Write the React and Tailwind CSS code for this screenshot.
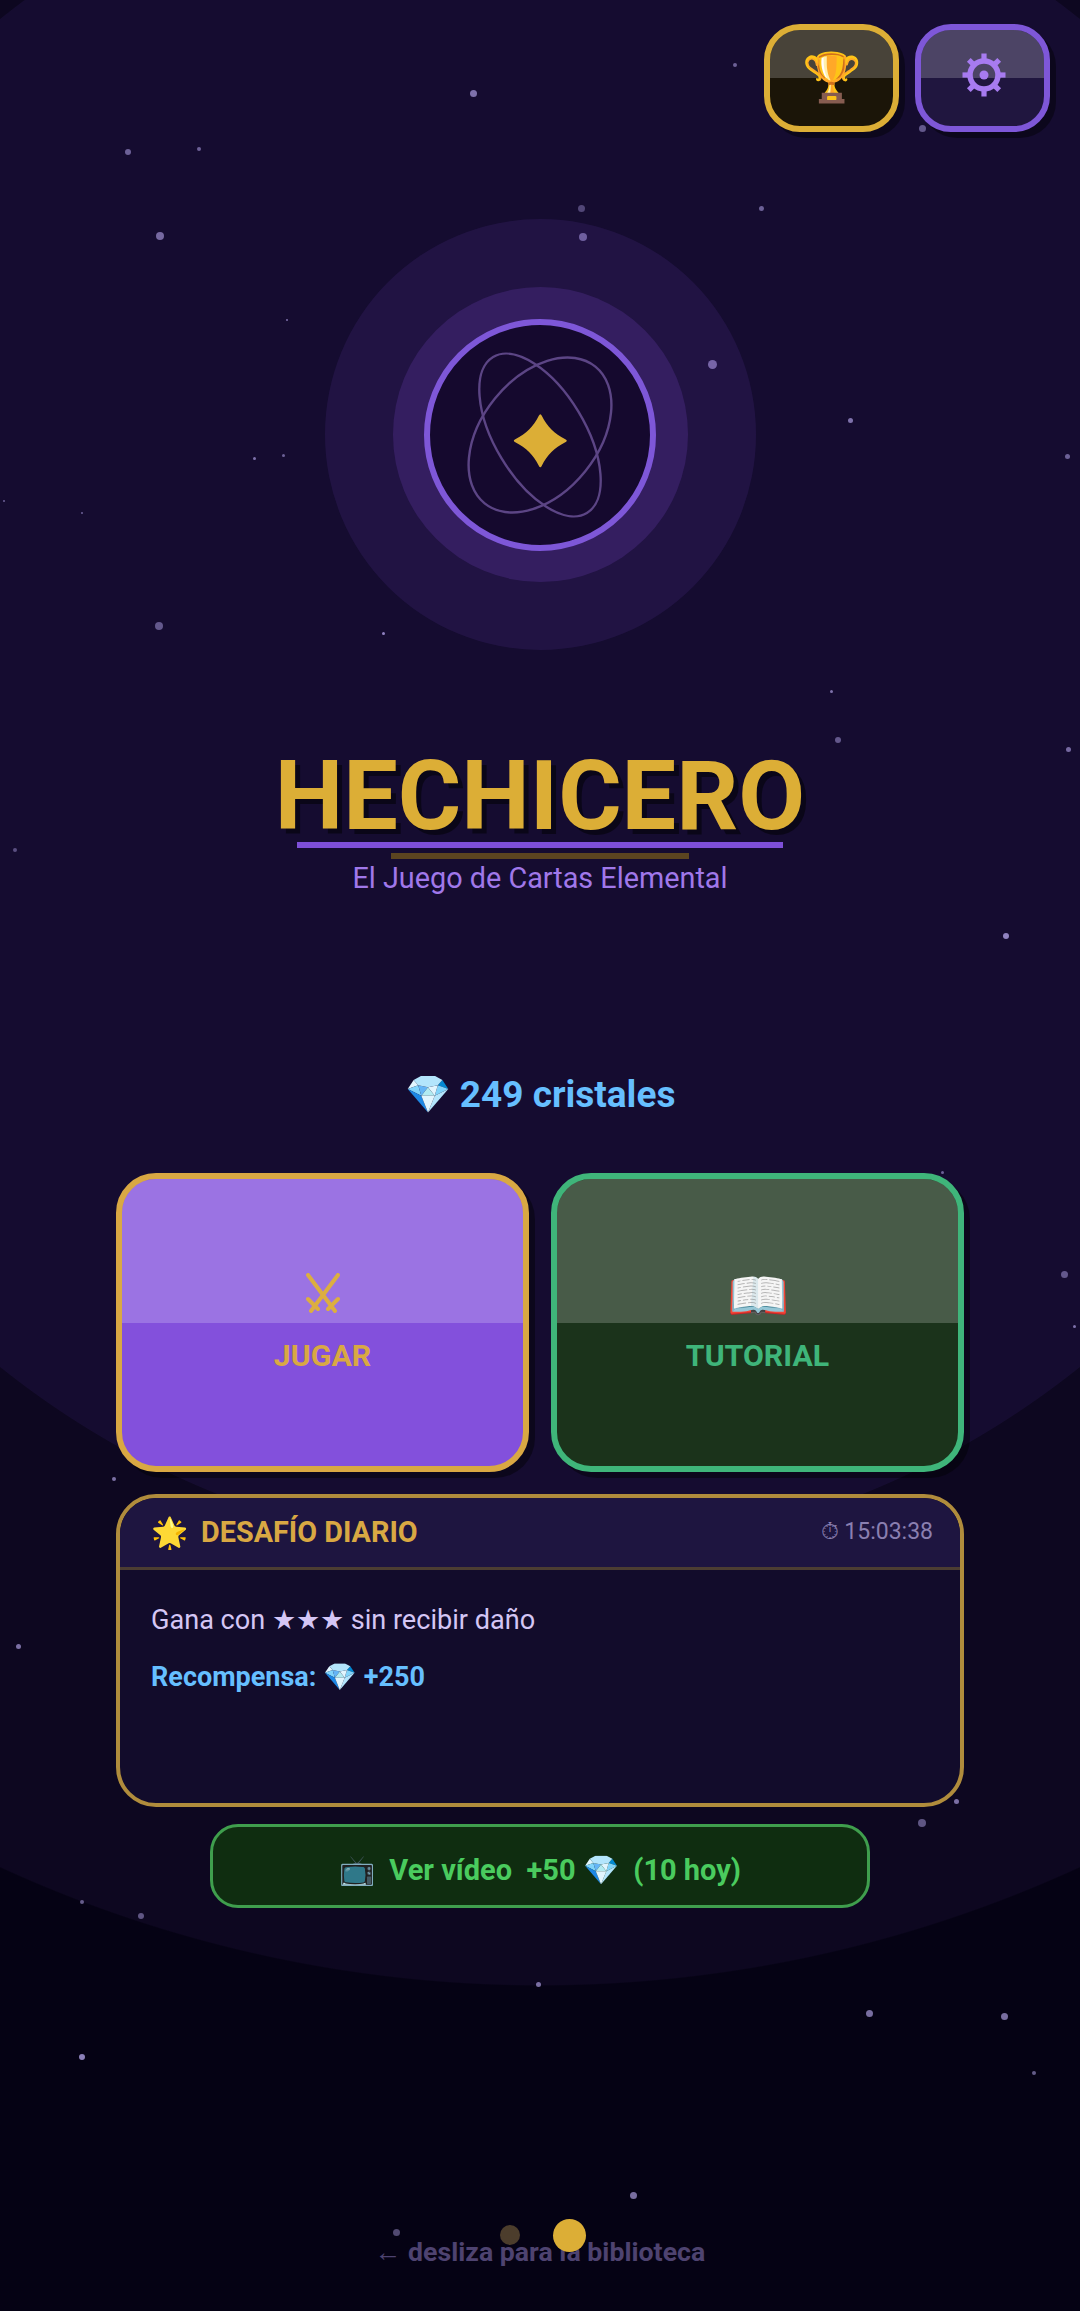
const stars = [
  [473, 93, 7, 0.6], [735, 65, 4, 0.5], [922, 128, 7, 0.45], [128, 152, 6, 0.5], [199, 149, 4, 0.5],
  [160, 236, 8, 0.55], [581, 208, 7, 0.35], [583, 237, 8, 0.5], [761, 208, 5, 0.5], [712, 364, 9, 0.55],
  [850, 420, 5, 0.6], [1067, 456, 5, 0.5], [287, 320, 2, 0.6], [254, 458, 3, 0.6], [283, 455, 3, 0.5],
  [4, 501, 2, 0.5], [82, 513, 2, 0.5], [159, 626, 8, 0.45], [383, 633, 3, 0.7], [831, 691, 3, 0.6],
  [838, 740, 6, 0.45], [1068, 749, 5, 0.55], [1006, 936, 6, 0.7], [15, 850, 4, 0.4], [1064, 1274, 7, 0.45],
  [1074, 1326, 3, 0.6], [942, 1172, 3, 0.5], [114, 1479, 4, 0.6], [18, 1646, 5, 0.6], [956, 1801, 5, 0.6],
  [922, 1823, 8, 0.45], [82, 1902, 4, 0.5], [141, 1916, 6, 0.45], [538, 1984, 5, 0.6], [869, 2013, 7, 0.6],
  [1004, 2016, 7, 0.6], [82, 2057, 6, 0.7], [1034, 2073, 4, 0.5], [633, 2195, 7, 0.6], [396, 2232, 7, 0.4],
];

const IconButton = ({ border, bg, children }) => (
  <div className={`relative w-[135px] h-[108px] rounded-[36px] border-[6px] overflow-hidden flex items-center justify-center shadow-[6px_6px_0_rgba(0,0,0,0.4)] ${border} ${bg}`}>
    <div className="absolute inset-x-0 top-0 h-1/2 bg-white/20" />
    <span className="relative leading-none">{children}</span>
  </div>
);

const MenuCard = ({ border, bg, icon, label, labelColor }) => (
  <div className={`relative h-[299px] rounded-[40px] border-[6px] overflow-hidden flex flex-col items-center justify-center shadow-[6px_6px_0_rgba(0,0,0,0.4)] ${border} ${bg}`}>
    <div className="absolute inset-x-0 top-0 h-1/2 bg-white/20" />
    <div className="relative h-[60px] pb-[12px] flex items-center justify-center">{icon}</div>
    <div className={`relative mt-[6px] text-[30.3px] leading-[36px] font-bold ${labelColor}`}>{label}</div>
  </div>
);

const Gear = () => (
  <svg width="44" height="44" viewBox="-22 -22 44 44" className="mb-[6px] ml-[2px] block text-[#a77bf0]" fill="currentColor">
    {[0, 45, 90, 135, 180, 225, 270, 315].map((a) => (
      <rect key={a} x="-2.6" y="-21.5" width="5.2" height="8" transform={`rotate(${a})`} />
    ))}
    <circle r="14" fill="none" stroke="currentColor" strokeWidth="5.5" />
    <circle r="4.5" />
  </svg>
);

const Swords = () => (
  <svg width="34" height="40" viewBox="-1 -1 34 40" className="mb-[5px] block" fill="none" stroke="#dcae40" strokeWidth="4" strokeLinecap="round">
    <path d="M1 1 L28 37" />
    <path d="M31 1 L4 37" />
    <path d="M1 25 L11 35" />
    <path d="M31 25 L21 35" />
  </svg>
);

export default function App() {
  return (
    <div className="relative w-[1080px] h-[2311px] overflow-hidden font-[Roboto,sans-serif] bg-[radial-gradient(circle_864px_at_540px_693px,#150c30_99.9%,transparent_100%),radial-gradient(circle_1293px_at_540px_693px,#0d0720_99.9%,transparent_100%),linear-gradient(#050214,#050214)]">
      {/* stars */}
      {stars.map(([x, y, d, o], i) => (
        <div
          key={i}
          className="absolute rounded-full bg-[#c4b5fd]"
          style={{ left: x - d / 2, top: y - d / 2, width: d, height: d, opacity: o }}
        />
      ))}

      <div className="relative flex flex-col items-center">
        {/* top buttons */}
        <div className="w-full flex justify-end gap-4 pt-[24px] pr-[30px]">
          <IconButton border="border-[#dcae36]" bg="bg-[#1b1508]">
            <span className="text-[48px]">🏆</span>
          </IconButton>
          <IconButton border="border-[#7e57d8]" bg="bg-[#20163f]">
            <Gear />
          </IconButton>
        </div>

        {/* logo */}
        <div className="mt-[87px] w-[431px] h-[431px] rounded-full bg-[#8b4fe0]/[.11] flex items-center justify-center">
          <div className="w-[295px] h-[295px] rounded-full bg-[#8b4fe0]/[.19] flex items-center justify-center">
            <div className="w-[232px] h-[232px] rounded-full border-[6px] border-[#7e57d8] bg-[#15092e] flex items-center justify-center">
              <svg width="220" height="220" viewBox="-110 -110 220 220">
                <ellipse rx="45" ry="91" transform="rotate(-31)" fill="none" stroke="#5c4585" strokeWidth="2.4" />
                <ellipse rx="58" ry="88" transform="rotate(39)" fill="none" stroke="#5c4585" strokeWidth="2.4" />
                <path
                  transform="translate(0.3 5.7)"
                  d="M-1.5 -25 Q0 -28 1.5 -25 C7 -14 14 -7 25 -1.5 Q28 0 25 1.5 C14 7 7 14 1.5 25 Q0 28 -1.5 25 C-7 14 -14 7 -25 1.5 Q-28 0 -25 -1.5 C-14 -7 -7 -14 -1.5 -25 Z"
                  fill="#dcae36"
                />
              </svg>
            </div>
          </div>
        </div>

        {/* title */}
        <h1 className="mt-[98px] text-[97px] leading-[96px] font-bold text-[#dcae36] [text-shadow:5px_5px_0_rgba(0,0,0,0.5)]">
          HECHICERO
        </h1>
        <div className="mt-[-2px] w-[486px] h-[6px] bg-[#7e4fd8]" />
        <div className="mt-[5px] w-[298px] h-[6px] bg-[#5c4520]" />
        <p className="mt-[1px] text-[28.8px] leading-[36px] text-[#a078ea]">El Juego de Cartas Elemental</p>

        {/* crystals */}
        <div className="mt-[177px] text-[37px] leading-[44px] font-bold text-[#66bfff]">💎 249 cristales</div>

        {/* main cards */}
        <div className="mt-[56px] w-[848px] grid grid-cols-2 gap-[22px]">
          <MenuCard
            border="border-[#d9a843]"
            bg="bg-[#8350dc]"
            icon={<Swords />}
            label="JUGAR"
            labelColor="text-[#d9a843]"
          />
          <MenuCard
            border="border-[#3fb57a]"
            bg="bg-[#1b331b]"
            icon={<span className="text-[50px] leading-none">📖</span>}
            label="TUTORIAL"
            labelColor="text-[#3fb57a]"
          />
        </div>

        {/* daily challenge */}
        <div className="mt-[22px] w-[848px] h-[313px] rounded-[40px] border-4 border-[#b08c3c] bg-[#120c2b] overflow-hidden">
          <div className="h-[69px] pl-[31px] pr-[27px] flex items-center justify-between bg-[#1e1540] border-b-[3px] border-[#4c3d32] box-content">
            <div className="flex items-center gap-[13px]">
              <span className="text-[30px] leading-none">🌟</span>
              <span className="text-[28.8px] font-bold text-[#d9a843]">DESAFÍO DIARIO</span>
            </div>
            <span className="text-[23px] text-[#8a7fb0]">⏱ 15:03:38</span>
          </div>
          <div className="px-[31px] pt-[32px]">
            <p className="text-[27.1px] leading-[36px] text-[#d4c6f5]">Gana con ★★★ sin recibir daño</p>
            <p className="mt-[21px] text-[27px] leading-[36px] font-bold text-[#66bfff]">Recompensa: 💎 +250</p>
          </div>
        </div>

        {/* ad button */}
        <div className="mt-[17px] w-[660px] h-[84px] pt-[10px] rounded-[28px] border-[3px] border-[#3f9e4d] bg-[#0f2d10] flex items-center justify-center text-[29px] font-bold text-[#4acb5e] whitespace-pre">
          📺  Ver vídeo  +50 💎  (10 hoy)
        </div>

        {/* swipe hint */}
        <div className="mt-[328px] text-[26.7px] leading-[32px] font-bold text-[#4e4370]">← desliza para la biblioteca</div>
      </div>

      {/* page dots */}
      <div className="absolute left-[500px] top-[2218px] flex items-center gap-[33px] h-[34px]">
        <div className="w-[20px] h-[20px] rounded-full bg-[#4c3d2c]" />
        <div className="w-[33px] h-[33px] rounded-full bg-[#dcae36]" />
      </div>
    </div>
  );
}
